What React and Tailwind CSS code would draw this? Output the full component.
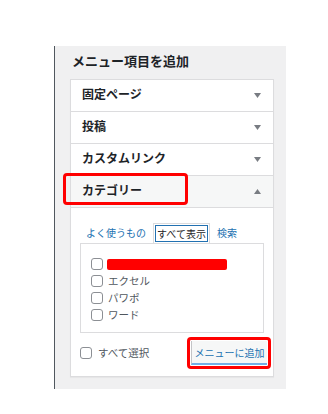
import React from "react";

const font = { fontFamily: '"Noto Sans CJK JP", "Noto Sans", sans-serif' };

function Tri({ up }) {
  return (
    <svg width="7" height="5" viewBox="0 0 7 5" className="shrink-0">
      {up ? (
        <path d="M0 5 L3.5 0 L7 5 Z" fill="#787c82" />
      ) : (
        <path d="M0 0 L7 0 L3.5 5 Z" fill="#787c82" />
      )}
    </svg>
  );
}

function Row({ label, active, highlight }) {
  return (
    <div
      className={`relative flex h-[32px] items-center justify-between border-b border-[#dcdcde] pl-[11px] pr-[12px] ${
        active ? "bg-[#f6f7f7]" : "bg-white"
      }`}
    >
      <span className="mt-[-3px] text-[12px] font-bold text-[#1d2327]">{label}</span>
      <Tri up={active} />
      {highlight && (
        <div className="absolute left-[-8px] top-[-3px] h-[32px] w-[125px] rounded-[4px] border-[3px] border-[#ff0000]" />
      )}
    </div>
  );
}

function Box() {
  return (
    <span className="inline-block h-[12px] w-[12px] shrink-0 rounded-[3px] border border-[#8c8f94] bg-white" />
  );
}

export default function App() {
  return (
    <div className="h-[414px] w-[328px] bg-white pt-[46px] pl-[54px]" style={font}>
      <div className="flex h-[343px] w-[232px] flex-col border-l border-[#50575e] bg-[#f0f0f1] pl-[15px] pr-[12px]">
        <div className="flex h-[33px] items-center pb-[4px] pl-[2px] text-[13px] font-bold text-[#1d2327]">
          メニュー項目を追加
        </div>
        <div className="border border-[#dcdcde] bg-white shadow-[0_1px_1px_rgba(0,0,0,0.04)]">
          <Row label="固定ページ" />
          <Row label="投稿" />
          <Row label="カスタムリンク" />
          <Row label="カテゴリー" active highlight />
          <div className="px-[9px] pt-[15px] pb-[7px]">
            <div className="flex items-end pl-[6px] text-[10px]">
              <span className="mb-[3px] text-[#2271b1]">よく使うもの</span>
              <div className="ml-[7px] border border-b-0 border-[#dcdcde] bg-white p-[1px]">
                <div className="border border-[#2271b1] px-[1px] leading-[15px] text-[#1d2327]">すべて表示</div>
              </div>
              <span className="mb-[3px] ml-[7px] text-[#2271b1]">検索</span>
            </div>
            <div className="flex h-[90px] flex-col gap-[5px] border border-[#dcdcde] bg-white pl-[10px] pt-[14px] text-[10.5px] text-[#50575e]">
              <div className="flex h-[12px] items-center">
                <Box />
                <span className="ml-[4px] h-[11px] w-[120px] rounded-[2px] bg-[#ff0000]" />
              </div>
              <div className="flex h-[12px] items-center gap-[5px]">
                <Box />
                <span>エクセル</span>
              </div>
              <div className="flex h-[12px] items-center gap-[5px]">
                <Box />
                <span>パワポ</span>
              </div>
              <div className="flex h-[12px] items-center gap-[5px]">
                <Box />
                <span>ワード</span>
              </div>
            </div>
            <div className="mt-[4px] flex h-[32px] items-center justify-between">
              <div className="flex items-center gap-[6px] text-[10.5px] text-[#50575e]">
                <Box />
                <span>すべて選択</span>
              </div>
              <div className="relative mr-[-7px] flex h-[32px] w-[84px] items-center justify-center rounded-[4px] border-[3px] border-[#ff0000]">
                <div className="flex h-[24px] w-[76px] items-center justify-center whitespace-nowrap border-l border-[#c3c4c7] border-b-2 border-b-[#72aee6] bg-[#f6f7f7] text-[10px] text-[#2271b1]">
                  メニューに追加
                </div>
              </div>
            </div>
          </div>
        </div>
      </div>
    </div>
  );
}
